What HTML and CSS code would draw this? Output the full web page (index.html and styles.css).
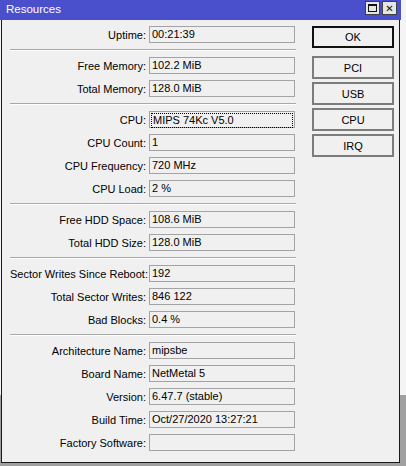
FILE: index.html
```html
<!DOCTYPE html>
<html lang="en">
<head>
    <meta charset="UTF-8">
    <title>Resources</title>
    <link rel="stylesheet" href="styles.css">
</head>
<body>
    <div class="window">
        <div class="titlebar">
            <span class="title">Resources</span>
            <div class="title-btns">
                <span class="tbtn"><span class="max-icon"></span></span>
                <span class="tbtn close">&#x2715;</span>
            </div>
        </div>

        <div class="window-body">
            <div class="form">
                <div class="group">
                    <div class="row"><label>Uptime:</label><div class="field">00:21:39</div></div>
                </div>
                <div class="sep"></div>
                <div class="group">
                    <div class="row"><label>Free Memory:</label><div class="field">102.2 MiB</div></div>
                    <div class="row"><label>Total Memory:</label><div class="field">128.0 MiB</div></div>
                </div>
                <div class="sep"></div>
                <div class="group">
                    <div class="row"><label>CPU:</label><div class="field focused"><span>MIPS 74Kc V5.0</span></div></div>
                    <div class="row"><label>CPU Count:</label><div class="field">1</div></div>
                    <div class="row"><label>CPU Frequency:</label><div class="field">720 MHz</div></div>
                    <div class="row"><label>CPU Load:</label><div class="field">2 %</div></div>
                </div>
                <div class="sep"></div>
                <div class="group">
                    <div class="row"><label>Free HDD Space:</label><div class="field">108.6 MiB</div></div>
                    <div class="row"><label>Total HDD Size:</label><div class="field">128.0 MiB</div></div>
                </div>
                <div class="sep"></div>
                <div class="group">
                    <div class="row"><label>Sector Writes Since Reboot:</label><div class="field">192</div></div>
                    <div class="row"><label>Total Sector Writes:</label><div class="field">846 122</div></div>
                    <div class="row"><label>Bad Blocks:</label><div class="field">0.4 %</div></div>
                </div>
                <div class="sep"></div>
                <div class="group">
                    <div class="row"><label>Architecture Name:</label><div class="field">mipsbe</div></div>
                    <div class="row"><label>Board Name:</label><div class="field">NetMetal 5</div></div>
                    <div class="row"><label>Version:</label><div class="field">6.47.7 (stable)</div></div>
                    <div class="row"><label>Build Time:</label><div class="field">Oct/27/2020 13:27:21</div></div>
                    <div class="row"><label>Factory Software:</label><div class="field"></div></div>
                </div>
            </div>

            <div class="buttons">
                <button class="btn default">OK</button>
                <div class="btn-list">
                    <button class="btn">PCI</button>
                    <button class="btn">USB</button>
                    <button class="btn">CPU</button>
                    <button class="btn">IRQ</button>
                </div>
            </div>
        </div>
    </div>
</body>
</html>
```

FILE: styles.css
```css
body {
    margin: 0;
    width: 406px;
    height: 466px;
    overflow: hidden;
    font-family: "Liberation Sans", Arial, sans-serif;
    font-size: 11px;
    color: #000;
    background: linear-gradient(to bottom, #f4f4f4 0, #f4f4f4 395px, #a0a0a0 395px);
}

.window {
    width: 401px;
    margin-left: 1px;
}

/* title bar */
.titlebar {
    height: 20px;
    background: #4a4fcc;
    display: flex;
    align-items: center;
    justify-content: space-between;
    padding: 0 4px 0 6px;
    margin-left: -1px;
    box-sizing: border-box;
    width: 401px;
}

.title {
    color: #fff;
    font-size: 11.5px;
    padding-bottom: 2px;
}

.title-btns {
    display: flex;
    gap: 2px;
    align-self: flex-start;
    margin-top: 1px;
}

.tbtn {
    width: 15px;
    height: 14px;
    box-sizing: border-box;
    background: #e6e6e6;
    border: 1px solid #404040;
    display: flex;
    align-items: center;
    justify-content: center;
}

.max-icon {
    width: 9px;
    height: 8px;
    box-sizing: border-box;
    border: 1px solid #111;
    border-top-width: 2px;
}

.close {
    font-size: 10px;
    font-weight: bold;
    color: #111;
    font-family: "DejaVu Sans", sans-serif;
}

/* body */
.window-body {
    height: 442px;
    background: #f0f0f0;
    border-left: 1px solid #1a1a1a;
    border-right: 1px solid #1a1a1a;
    border-bottom: 1px solid #1a1a1a;
    box-sizing: content-box;
    width: 399px;
    display: flex;
    padding-top: 6px;
    box-sizing: border-box;
    height: 443px;
}

.form {
    width: 286px;
    margin-left: 8px;
}

.group {
    display: flex;
    flex-direction: column;
    gap: 6px;
}

.row {
    display: flex;
    align-items: center;
    gap: 3px;
    height: 17px;
}

.row label {
    width: 136px;
    text-align: right;
    white-space: nowrap;
}

.field {
    width: 146px;
    height: 17px;
    box-sizing: border-box;
    border: 1px solid #a3a3a3;
    background: #f0f0f0;
    padding: 0 2px;
    line-height: 15px;
    white-space: nowrap;
}

.field.focused {
    padding: 1px;
}

.field.focused span {
    display: block;
    height: 13px;
    line-height: 13px;
    padding-left: 1px;
    border: 1px dotted #000;
}

.sep {
    height: 1px;
    background: #a8a8a8;
    border-bottom: 1px solid #fff;
    margin: 6px 0;
}

/* right buttons */
.buttons {
    margin-left: 16px;
    display: flex;
    flex-direction: column;
    gap: 8px;
}

.btn-list {
    display: flex;
    flex-direction: column;
    gap: 3px;
}

.btn {
    width: 82px;
    height: 23px;
    box-sizing: border-box;
    border: 2px solid #7c7c7c;
    background: #f0f0f0;
    font-family: "Liberation Sans", Arial, sans-serif;
    font-size: 11px;
    color: #000;
    padding: 0;
}

.btn.default {
    height: 22px;
    border: 2px solid #111;
}
```
